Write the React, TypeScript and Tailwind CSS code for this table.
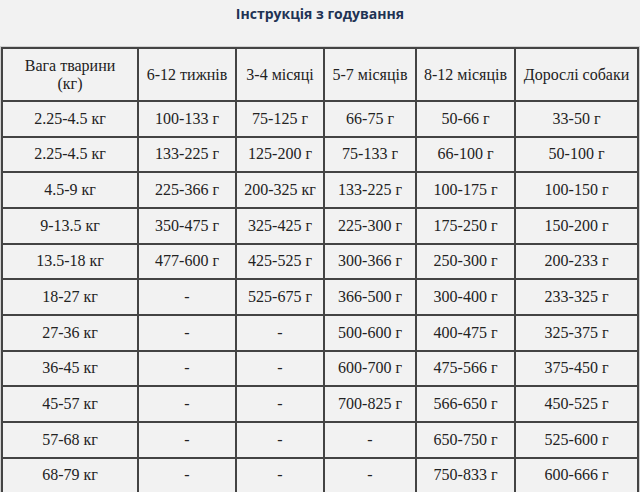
import React from "react";

const rows: string[][] = [
  ["2.25-4.5 кг", "100-133 г", "75-125 г", "66-75 г", "50-66 г", "33-50 г"],
  ["2.25-4.5 кг", "133-225 г", "125-200 г", "75-133 г", "66-100 г", "50-100 г"],
  ["4.5-9 кг", "225-366 г", "200-325 кг", "133-225 г", "100-175 г", "100-150 г"],
  ["9-13.5 кг", "350-475 г", "325-425 г", "225-300 г", "175-250 г", "150-200 г"],
  ["13.5-18 кг", "477-600 г", "425-525 г", "300-366 г", "250-300 г", "200-233 г"],
  ["18-27 кг", "-", "525-675 г", "366-500 г", "300-400 г", "233-325 г"],
  ["27-36 кг", "-", "-", "500-600 г", "400-475 г", "325-375 г"],
  ["36-45 кг", "-", "-", "600-700 г", "475-566 г", "375-450 г"],
  ["45-57 кг", "-", "-", "700-825 г", "566-650 г", "450-525 г"],
  ["57-68 кг", "-", "-", "-", "650-750 г", "525-600 г"],
  ["68-79 кг", "-", "-", "-", "750-833 г", "600-666 г"],
];

export default function App() {
  return (
    <div className="w-[640px] h-[492px] overflow-hidden bg-[#f2f2f2]">
      <div className="h-[46px] pt-[4px] text-center font-['Open_Sans',sans-serif] font-bold text-[14px] leading-[20px] text-[#1f3354]">
        Інструкція з годування
      </div>
      <div className="border border-[#d0d0d0]">
        <table className="w-full table-fixed border-separate border-spacing-0 border border-[#444] font-['Liberation_Serif',serif] text-[16px] leading-[18px] text-[#222]">
          <colgroup>
            <col className="w-[136px]" />
            <col className="w-[98px]" />
            <col className="w-[88px]" />
            <col className="w-[92px]" />
            <col className="w-[99px]" />
            <col className="w-[123px]" />
          </colgroup>
          <thead>
            <tr className="h-[53px]">
              <th className="border border-[#444] font-normal text-center align-middle px-0">
                Вага тварини
                <br />
                (кг)
              </th>
              <th className="border border-[#444] font-normal text-center align-middle px-0 whitespace-nowrap">6-12 тижнів</th>
              <th className="border border-[#444] font-normal text-center align-middle px-0 whitespace-nowrap">3-4 місяці</th>
              <th className="border border-[#444] font-normal text-center align-middle px-0 whitespace-nowrap">5-7 місяців</th>
              <th className="border border-[#444] font-normal text-center align-middle px-0 whitespace-nowrap">8-12 місяців</th>
              <th className="border border-[#444] font-normal text-center align-middle px-0 whitespace-nowrap">Дорослі собаки</th>
            </tr>
          </thead>
          <tbody>
            {rows.map((r, i) => (
              <tr key={i} className="h-[35.67px]">
                {r.map((c, j) => (
                  <td key={j} className="border border-[#444] text-center align-middle px-0 whitespace-nowrap">
                    {c}
                  </td>
                ))}
              </tr>
            ))}
          </tbody>
        </table>
      </div>
    </div>
  );
}
